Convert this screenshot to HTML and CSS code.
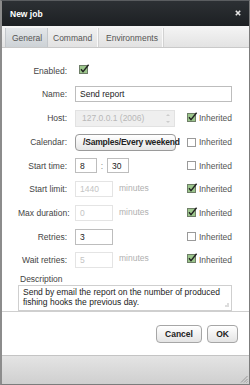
FILE: index.html
```html
<!DOCTYPE html>
<html>
<head>
<meta charset="utf-8">
<link rel="stylesheet" href="styles.css">
</head>
<body>
<div class="dialog">
  <div class="titlebar">
    <span class="title">New job</span>
    <svg class="close" width="6" height="6" viewBox="0 0 6 6"><path d="M0.8 0.8 L5.2 5.2 M5.2 0.8 L0.8 5.2" stroke="#e6e6e6" stroke-width="1.6"/></svg>
  </div>
  <div class="tabs">
    <div class="tab active">General</div>
    <div class="tab">Command</div>
    <div class="tab">Environments</div>
  </div>
  <div class="content">
    <div class="form">
      <div class="lbl">Enabled:</div>
      <div class="field"><span class="cb checked"><svg width="11" height="11" viewBox="0 0 11 11"><rect x="0.5" y="1.5" width="8" height="8" fill="#9cc68c" stroke="#6f7f68"/><path d="M2 5.2 L4 7.6 L9.6 0.8" fill="none" stroke="#222" stroke-width="1.4"/></svg></span></div>
      <div></div>

      <div class="lbl">Name:</div>
      <div class="field span2"><div class="input wide">Send report</div></div>

      <div class="lbl">Host:</div>
      <div class="field"><div class="input disabled host">127.0.0.1 (2006)<span class="spin"><svg width="4" height="11" viewBox="0 0 4 11"><path d="M0 3 L2 1 L4 3 Z M0 8 L2 10 L4 8 Z" fill="#ccc"/></svg></span></div></div>
      <div class="inh"><span class="cb checked"><svg width="11" height="11" viewBox="0 0 11 11"><rect x="0.5" y="1.5" width="8" height="8" fill="#9cc68c" stroke="#6f7f68"/><path d="M2 5.2 L4 7.6 L9.6 0.8" fill="none" stroke="#222" stroke-width="1.4"/></svg></span>Inherited</div>

      <div class="lbl">Calendar:</div>
      <div class="field"><div class="calbtn"><span>/Samples/Every weekend</span></div></div>
      <div class="inh"><span class="cb"></span>Inherited</div>

      <div class="lbl">Start time:</div>
      <div class="field"><div class="input small">8</div><span class="colon">:</span><div class="input small">30</div></div>
      <div class="inh"><span class="cb"></span>Inherited</div>

      <div class="lbl">Start limit:</div>
      <div class="field"><div class="input num disabled2">1440</div><span class="unit">minutes</span></div>
      <div class="inh"><span class="cb checked"><svg width="11" height="11" viewBox="0 0 11 11"><rect x="0.5" y="1.5" width="8" height="8" fill="#9cc68c" stroke="#6f7f68"/><path d="M2 5.2 L4 7.6 L9.6 0.8" fill="none" stroke="#222" stroke-width="1.4"/></svg></span>Inherited</div>

      <div class="lbl">Max duration:</div>
      <div class="field"><div class="input num disabled2">0</div><span class="unit">minutes</span></div>
      <div class="inh"><span class="cb checked"><svg width="11" height="11" viewBox="0 0 11 11"><rect x="0.5" y="1.5" width="8" height="8" fill="#9cc68c" stroke="#6f7f68"/><path d="M2 5.2 L4 7.6 L9.6 0.8" fill="none" stroke="#222" stroke-width="1.4"/></svg></span>Inherited</div>

      <div class="lbl">Retries:</div>
      <div class="field"><div class="input num">3</div></div>
      <div class="inh"><span class="cb"></span>Inherited</div>

      <div class="lbl">Wait retries:</div>
      <div class="field"><div class="input num disabled2">5</div><span class="unit">minutes</span></div>
      <div class="inh"><span class="cb checked"><svg width="11" height="11" viewBox="0 0 11 11"><rect x="0.5" y="1.5" width="8" height="8" fill="#9cc68c" stroke="#6f7f68"/><path d="M2 5.2 L4 7.6 L9.6 0.8" fill="none" stroke="#222" stroke-width="1.4"/></svg></span>Inherited</div>
    </div>
    <div class="desc-label">Description</div>
    <div class="textarea">Send by email the report on the number of produced fishing hooks the previous day.<svg class="grip" width="6" height="6" viewBox="0 0 6 6"><path d="M5 1 V5 M3 3 V5 M1 5 V5.01" stroke="#bbb" stroke-width="1"/></svg></div>
  </div>
  <div class="actions">
    <div class="btn">Cancel</div>
    <div class="btn ok">OK</div>
  </div>
  <div class="statusbar"><svg class="sgrip" width="8" height="8" viewBox="0 0 8 8"><path d="M7.5 1 L1 7.5 M7.5 4 L4 7.5 M7.5 6.5 L6.5 7.5" stroke="#8a8a8a" stroke-width="0.8"/></svg></div>
</div>
</body>
</html>
```
FILE: styles.css
```css
html, body {
  margin: 0;
  padding: 0;
  background: #ffffff;
}
body {
  font-family: "Liberation Sans", Arial, sans-serif;
  font-size: 8.5px;
  color: #333;
}
.dialog {
  width: 250px;
  height: 385px;
  box-sizing: border-box;
  border: 1px solid #7c7c7c;
  border-left: 2px solid #8c8c8c;
  border-top: 1px solid #5a5d60;
  display: flex;
  flex-direction: column;
  background: #fff;
}
.titlebar {
  height: 25px;
  flex: none;
  background: linear-gradient(#2c3034, #1d2023);
  display: flex;
  align-items: center;
  justify-content: space-between;
  padding: 0 8px 0 8px;
}
.title {
  color: #fff;
  font-weight: bold;
  font-size: 8.5px;
}
.close {
  display: block;
  margin-top: -1px;
}
.tabs {
  height: 22px;
  flex: none;
  box-sizing: border-box;
  background: linear-gradient(#f5f5f5, #e3e3e3);
  border-bottom: 1px solid #c9c9c9;
  display: flex;
  align-items: flex-end;
  padding-left: 3px;
}
.tab {
  height: 19px;
  box-sizing: border-box;
  padding: 0 6px;
  display: flex;
  align-items: center;
  color: #555;
  border-right: 1px solid #d2d2d2;
  box-shadow: inset -1px 0 0 #fafafa;
  background: linear-gradient(#f0f0f0, #e2e2e2);
}
.tab.active {
  background: linear-gradient(#e3e6e9, #cdd2d6);
  border-left: 1px solid #c3c7cb;
  border-right: 1px solid #c3c7cb;
  box-shadow: none;
  width: 43px;
  padding: 0 0 0 6px;
}
.tab:nth-child(2) { width: 51px; padding-left: 5px; }
.tab:nth-child(3) { width: 65px; padding-left: 7px; }
.content {
  flex: 1;
  padding: 11px 16px 0 16px;
  border-bottom: 1px solid #cfcfcf;
}
.form {
  display: grid;
  grid-template-columns: 57px 112px 46px;
  grid-template-rows: 23px 24px 24px 24px 23px 24px 24px 23px 23px;
  align-items: center;
}
.lbl {
  text-align: right;
  padding-right: 8px;
  color: #444;
  white-space: nowrap;
}
.field {
  display: flex;
  align-items: center;
}
.span2 {
  grid-column: 2 / 4;
}
.input {
  height: 16px;
  box-sizing: border-box;
  border: 1px solid #bdbdbd;
  background: #fff;
  display: flex;
  align-items: center;
  padding-left: 4px;
  color: #222;
}
.input.wide {
  width: 157px;
}
.input.host {
  width: 100px;
  height: 17px;
  background: #efefef;
  border-color: #e2e2e2;
  color: #b8b8b8;
  padding-left: 6px;
  justify-content: space-between;
  padding-right: 4px;
}
.spin svg { display: block; }
.input.small {
  width: 22px;
  height: 15px;
}
.colon {
  width: 10px;
  text-align: center;
  color: #888;
}
.input.num {
  width: 38px;
}
.input.disabled2 {
  border-color: #e4e4e4;
  color: #c4c4c4;
}
.unit {
  margin-left: 6px;
  color: #b0b0b0;
  margin-top: -3px;
}
.calbtn {
  width: 101px;
  height: 17px;
  box-sizing: border-box;
  border: 1px solid #9a9a9a;
  border-radius: 4px;
  background: linear-gradient(#ffffff, #e6e6e6);
  white-space: nowrap;
  display: flex;
  align-items: center;
  padding-left: 7px;
  font-weight: bold;
  color: #222;
  letter-spacing: -0.2px;
}
.inh {
  display: flex;
  align-items: center;
  color: #555;
  white-space: nowrap;
}
.cb {
  display: inline-block;
  flex: none;
  width: 9px;
  height: 9px;
  box-sizing: border-box;
  border: 1px solid #9a9a9a;
  background: #fff;
  margin-right: 3px;
  position: relative;
}
.cb.checked {
  border: none;
  width: 10px;
  margin-right: 2px;
}
.cb.checked svg {
  display: block;
  position: absolute;
  left: 0;
  top: -2px;
}
.field .cb {
  margin-left: 4px;
}
.desc-label {
  margin-top: 3px;
  padding-left: 2px;
  color: #444;
  height: 11px;
  line-height: 11px;
}
.textarea {
  width: 214px;
  height: 26px;
  box-sizing: border-box;
  border: 1px solid #cfcfcf;
  padding: 2px 4px 0 4px;
  line-height: 9.5px;
  color: #222;
  position: relative;
}
.grip {
  position: absolute;
  right: 2px;
  bottom: 2px;
}
.actions {
  height: 43px;
  flex: none;
  display: flex;
  justify-content: flex-end;
  align-items: flex-start;
  padding: 13px 11px 0 0;
  box-sizing: border-box;
  gap: 5px;
}
.btn {
  height: 18px;
  box-sizing: border-box;
  border: 1px solid #a6a6a6;
  border-radius: 4px;
  background: linear-gradient(#ffffff, #e4e4e4);
  display: flex;
  align-items: center;
  justify-content: center;
  font-weight: bold;
  color: #222;
  width: 46px;
}
.btn.ok {
  width: 31px;
}
.statusbar {
  flex: 1;
  background: linear-gradient(#e4e4e4, #cfcfcf);
  border-top: 1px solid #c4c4c4;
  position: relative;
}
.sgrip {
  position: absolute;
  right: 1px;
  bottom: 1px;
}
```
